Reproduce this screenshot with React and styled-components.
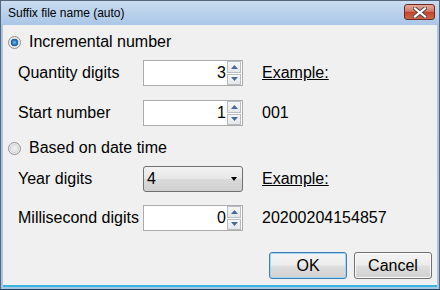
import React from 'react';
import styled, { createGlobalStyle } from 'styled-components';

const Global = createGlobalStyle`
  html, body { margin: 0; padding: 0; background: #ffffff; }
  body { font-family: "Liberation Sans", Arial, sans-serif; color: #000; }
`;

const Window = styled.div`
  width: 440px;
  height: 290px;
  box-sizing: border-box;
  display: flex;
  flex-direction: column;
  border: 1px solid #56667a;
  border-bottom-color: #1b3f5c;
  background: linear-gradient(#c9dcf1, #aac6e6 24px, #a9c5e6);
  padding: 0 2px 2px 2px;
`;

const TitleBar = styled.div`
  height: 24px;
  display: flex;
  align-items: center;
  padding-left: 5px;
  padding-right: 2px;
`;

const Title = styled.span`
  font-size: 12px;
  color: #000;
  line-height: 1;
  margin-top: -1px;
`;

const CloseButton = styled.div`
  margin-left: auto;
  width: 31px;
  height: 16px;
  box-sizing: border-box;
  border: 1px solid #6b2a22;
  border-radius: 3px;
  background: linear-gradient(#e3a898, #d47a66 45%, #c2432c 50%, #d0654d);
  display: flex;
  align-items: center;
  justify-content: center;
  margin-top: -2px;
`;

const Client = styled.div`
  flex: 1;
  background: #f0f0f0;
  border-bottom: 2px solid #3bb6e3;
  display: flex;
  flex-direction: column;
  padding: 0 3px 0 5px;
`;

const RadioRow = styled.div`
  height: 20px;
  display: flex;
  align-items: center;
  margin-top: ${p => p.$mt}px;
  font-size: 16px;
`;

const RadioDot = styled.span`
  width: 13px;
  height: 13px;
  box-sizing: border-box;
  border-radius: 50%;
  border: 1px solid #8f8f8f;
  background: ${p =>
    p.$checked
      ? 'radial-gradient(circle at 50% 50%, #7ec3f0 0, #2a7fc4 2px, #1c5e99 3.5px, #d8d8d8 4px, #f4f4f4 5.5px)'
      : 'radial-gradient(circle at 50% 50%, #f2f2f2 0, #e2e2e2 3.5px, #d4d4d4 4px, #f4f4f4 5.5px)'};
  margin-right: 8px;
  margin-left: 0;
`;

const FieldRow = styled.div`
  display: grid;
  grid-template-columns: 125px 100px auto;
  align-items: center;
  height: 26px;
  margin-top: ${p => p.$mt}px;
  padding-left: 10px;
  font-size: 16px;
`;

const Label = styled.span`
  white-space: nowrap;
`;

const Side = styled.span`
  margin-left: 19px;
  text-decoration: ${p => (p.$underline ? 'underline' : 'none')};
  white-space: nowrap;
`;

const SpinBox = styled.div`
  width: 100px;
  height: 26px;
  box-sizing: border-box;
  border: 1px solid #acacac;
  background: #fff;
  display: flex;
  align-items: stretch;
`;

const SpinValue = styled.div`
  flex: 1;
  text-align: right;
  padding-right: 1px;
  display: flex;
  align-items: center;
  justify-content: flex-end;
  font-size: 16px;
`;

const SpinButtons = styled.div`
  width: 14px;
  display: flex;
  flex-direction: column;
  gap: 1px;
  padding: 0 1px 0 0;
`;

const SpinButton = styled.div`
  flex: 1;
  box-sizing: border-box;
  border: 1px solid #b9bcc1;
  background: linear-gradient(#f6f7f8, #e4e7eb);
  display: flex;
  align-items: center;
  justify-content: center;
`;

const Combo = styled.div`
  width: 100px;
  height: 26px;
  box-sizing: border-box;
  border: 1px solid #707070;
  border-radius: 3px;
  background: linear-gradient(#f3f3f3, #e6e6e6 50%, #dadada 51%, #d0d0d0);
  display: flex;
  align-items: center;
  padding: 0 5px 0 3px;
  font-size: 16px;
`;

const ComboArrow = styled.span`
  margin-left: auto;
  width: 0;
  height: 0;
  border-left: 3.5px solid transparent;
  border-right: 3.5px solid transparent;
  border-top: 4px solid #000;
`;

const ButtonBar = styled.div`
  display: flex;
  justify-content: flex-end;
  gap: 7px;
  margin-top: 21px;
  padding-right: 2px;
`;

const Button = styled.div`
  width: 78px;
  height: 27px;
  box-sizing: border-box;
  border: 1px solid ${p => (p.$default ? '#3c7fb1' : '#707070')};
  border-radius: 3px;
  box-shadow: ${p => (p.$default ? 'inset 0 0 0 1px #9fd7f5' : 'inset 0 0 0 1px #fbfbfb')};
  background: linear-gradient(#f4f4f4, #ececec 48%, #dedede 52%, #d1d1d1);
  display: flex;
  align-items: center;
  justify-content: center;
  font-size: 16px;
`;

const Tri = ({ up }) => (
  <svg width="7" height="4" viewBox="0 0 7 4">
    <path d={up ? 'M0 4 L3.5 0 L7 4 Z' : 'M0 0 L7 0 L3.5 4 Z'} fill="#4c679b" />
  </svg>
);

const Spin = ({ value }) => (
  <SpinBox>
    <SpinValue>{value}</SpinValue>
    <SpinButtons>
      <SpinButton><Tri up /></SpinButton>
      <SpinButton><Tri /></SpinButton>
    </SpinButtons>
  </SpinBox>
);

export default function App() {
  return (
    <>
      <Global />
      <Window>
        <TitleBar>
          <Title>Suffix file name (auto)</Title>
          <CloseButton>
            <svg width="14" height="11" viewBox="0 0 14 11">
              <path d="M2 1.5 L12 9.5 M12 1.5 L2 9.5" stroke="#4a4a4a" strokeWidth="4" strokeLinecap="square" />
              <path d="M2 1.5 L12 9.5 M12 1.5 L2 9.5" stroke="#ffffff" strokeWidth="2.2" strokeLinecap="square" />
            </svg>
          </CloseButton>
        </TitleBar>
        <Client>
          <RadioRow $mt={7}>
            <RadioDot $checked />
            Incremental number
          </RadioRow>
          <FieldRow $mt={8}>
            <Label>Quantity digits</Label>
            <Spin value="3" />
            <Side $underline>Example:</Side>
          </FieldRow>
          <FieldRow $mt={14}>
            <Label>Start number</Label>
            <Spin value="1" />
            <Side>001</Side>
          </FieldRow>
          <RadioRow $mt={12}>
            <RadioDot />
            Based on date time
          </RadioRow>
          <FieldRow $mt={8}>
            <Label>Year digits</Label>
            <Combo>4<ComboArrow /></Combo>
            <Side $underline>Example:</Side>
          </FieldRow>
          <FieldRow $mt={13}>
            <Label>Millisecond digits</Label>
            <Spin value="0" />
            <Side>20200204154857</Side>
          </FieldRow>
          <ButtonBar>
            <Button $default>OK</Button>
            <Button>Cancel</Button>
          </ButtonBar>
        </Client>
      </Window>
    </>
  );
}
